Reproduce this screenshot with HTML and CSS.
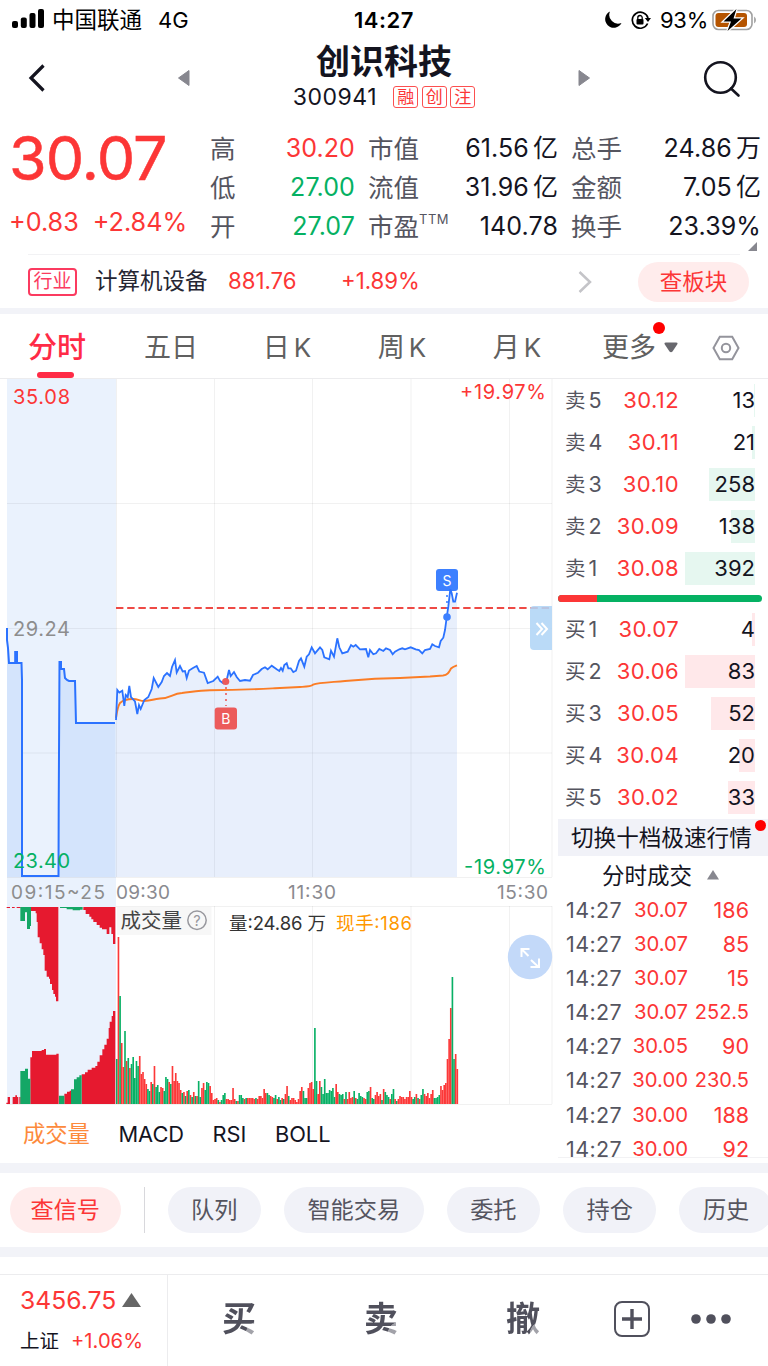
FILE: index.html
```html
<!DOCTYPE html>
<html lang="zh-CN">
<head>
  <meta charset="utf-8">
  <title>创识科技 300941</title>
  <link rel="stylesheet" href="styles.css">
</head>
<body>
  <div class="status-bar">
    <svg class="signal" width="32" height="20" viewBox="0 0 32 20">
      <rect x="0" y="12" width="6" height="7" rx="2"/>
      <rect x="8.800" y="8.500" width="6" height="10.500" rx="2"/>
      <rect x="17.500" y="4" width="6" height="15" rx="2"/>
      <rect x="26" y="0" width="6" height="19" rx="2"/>
    </svg>
    <span class="carrier">中国联通</span>
    <span class="network">4G</span>
    <span class="clock">14:27</span>
    <svg class="moon" width="18" height="18" viewBox="0 0 18 18">
      <path d="M6 0.500A8.600 8.600 0 1 0 17.500 12A8.800 8.800 0 0 1 6 0.500Z"/>
    </svg>
    <svg class="lock" width="20" height="18" viewBox="0 0 20 18">
      <path d="M16.600 12.500A8 8 0 1 1 17 7" fill="none" stroke="#000" stroke-width="1.700"/>
      <path d="M13.800 7H20L17 11Z"/>
      <rect x="5.500" y="8" width="7" height="5.500" rx="1"/>
      <path d="M6.800 8.500V6.700a2.200 2.200 0 0 1 4.400 0V8.500" fill="none" stroke="#000" stroke-width="1.300"/>
    </svg>
    <span class="percent">93%</span>
    <svg class="battery" width="46" height="24" viewBox="0 0 46 24">
      <rect x="1" y="2.500" width="39" height="19" rx="5.500" fill="#fff" stroke="#a0a0a0" stroke-width="1.600"/>
      <rect x="3.500" y="5" width="31.500" height="14" rx="3" fill="#b55400"/>
      <path d="M42.200 8.500a4.500 4.500 0 0 1 0 7z" fill="#999"/>
      <path d="M24.500 1L11.500 13.500H19L15.500 23L29.500 10.500H21.500Z" stroke="#fff" stroke-width="2.500" paint-order="stroke"/>
    </svg>
  </div>

  <header class="title-bar">
    <svg class="back" width="18" height="28" viewBox="0 0 18 28"><path d="M15.500 1.500L3 14L15.500 26.500"/></svg>
    <svg class="prev" width="13" height="18" viewBox="0 0 13 18"><path d="M12 1.500V16.500L1.500 9Z"/></svg>
    <div class="stock">
      <h1>创识科技</h1>
      <div class="stock-code">300941 <i>融</i><i>创</i><i>注</i></div>
    </div>
    <svg class="next" width="13" height="18" viewBox="0 0 13 18"><path d="M1 1.500V16.500L11.500 9Z"/></svg>
    <svg class="search" width="38" height="38" viewBox="0 0 38 38"><circle cx="17.500" cy="17.500" r="15.300"/><path d="M28 28.500L35.500 35.500"/></svg>
  </header>

  <section class="quote">
    <div class="price up">
      <div class="last">30.07</div>
      <div class="change"><span>+0.83</span><span>+2.84%</span></div>
    </div>
    <dl>
      <dt>高</dt><dd class="up">30.20</dd>
      <dt>市值</dt><dd>61.56<b>亿</b></dd>
      <dt>总手</dt><dd>24.86<b>万</b></dd>
      <dt>低</dt><dd class="down">27.00</dd>
      <dt>流值</dt><dd>31.96<b>亿</b></dd>
      <dt>金额</dt><dd>7.05<b>亿</b></dd>
      <dt>开</dt><dd class="down">27.07</dd>
      <dt>市盈<sup>TTM</sup></dt><dd>140.78</dd>
      <dt>换手</dt><dd>23.39%</dd>
    </dl>
    <svg class="expand" width="9" height="9" viewBox="0 0 9 9"><path d="M9 0V9H0Z"/></svg>
  </section>

  <section class="industry">
    <span class="industry-tag">行业</span>
    <span class="industry-name">计算机设备</span>
    <span class="industry-index up">881.76</span>
    <span class="industry-rate up">+1.89%</span>
    <svg class="chevron" width="14" height="24" viewBox="0 0 14 24"><path d="M1.500 2L12 12L1.500 22"/></svg>
    <a class="sector-btn">查板块</a>
  </section>

  <nav class="tabs">
    <a class="active">分时</a>
    <a>五日</a>
    <a>日<s>K</s></a>
    <a>周<s>K</s></a>
    <a>月<s>K</s></a>
    <a class="more">更多<svg width="14" height="11" viewBox="0 0 14 11"><path d="M2 0.500H12Q14.500 0.500 13 2.800L8.500 9.500Q7 11 5.500 9.500L1 2.800Q-0.500 0.500 2 0.500Z"/></svg></a>
    <svg class="settings" width="28" height="26" viewBox="0 0 28 26"><path d="M7.800 1.700H20.200L26.500 13L20.200 24.300H7.800L1.500 13Z"/><circle cx="14" cy="13" r="4.200"/></svg>
  </nav>

  <main class="market">
    <div class="charts">
      <svg class="price-chart" width="558" height="528" viewBox="0 378 558 528">
        <rect class="auction-bg" x="7" y="379" width="109" height="527"/>
        <path class="grid" d="M7 503.500H552M7 628.500H552M7 753H552M7 877.500H552M116.500 379V877M214.500 379V877M312.500 379V877M411 379V877M509.500 379V877M552 379V877"/>
        <path class="auction-area" d="M7 628V640L8 648L9 663H14.500V652H17.500V663H21.500V876H58.500L59.500 662H61V669H64L65 678L67 681H75L76 723H115.500V877H7Z"/>
        <path class="auction-line" d="M7 628V640L8 648L9 663H15.200V652H17V663H21.500L22 680V876H58.500L58.700 809L59.500 662H61V669H64L65 678L67 680L69 681H75L76 723H115"/>
        <path class="area" id="area"/>
        <path class="prev-close" d="M116 608H552"/>
        <path class="average" d="M116 718C117 711 118 706 120 703C123 700 128 699 133 699C138 699 140 701 144 701C152 700.500 152 699.500 160 698.500C172 698 172 693.500 182 693C193 691.700 200 690.300 210 690.300C240 690 260 689 275 688.300L300 687C308 686.500 311 686.500 313 684.700C318 682.500 330 682.300 345 681L375 678.800L400 678L430 676.500L443 675.500C448 675 449 672 451 668.500C453 666.500 455 666 457 665.300"/>
        <path class="mark-dots sell" d="M447 595V612"/>
        <rect class="sell" x="436" y="569" width="22" height="22" rx="3"/>
        <path class="line" id="line"/>
        <path class="mark-dots buy" d="M226 687V706"/>
        <circle class="buy" cx="225.700" cy="681.500" r="3.600"/>
        <rect class="buy" x="214.700" y="707.500" width="22.300" height="22" rx="3"/>
        <text class="mark" x="225.800" y="724">B</text>
        <circle class="sell" cx="447" cy="617" r="3.800"/>
        <text class="mark" x="447" y="585.500">S</text>
        <path d="M552 606H534Q530 606 530 610V646Q530 650 534 650H552Z" fill="#b1d5f6" fill-opacity="0.88"/>
        <path class="fold" d="M536.500 623L542 629L536.500 635M541.500 623L547 629L541.500 635"/>
        <text class="axis up" x="13" y="404" textLength="57">35.08</text>
        <text class="axis up" x="460" y="399" textLength="86">+19.97%</text>
        <text class="axis flat" x="13" y="636" textLength="57">29.24</text>
        <text class="axis down" x="13" y="868" textLength="57">23.40</text>
        <text class="axis down" x="464" y="873.500" textLength="82">-19.97%</text>
        <text class="time flat" x="11" y="898.500" textLength="94">09:15~25</text>
        <text class="time" x="116" y="898.500" textLength="54">09:30</text>
        <text class="time" x="288" y="898.500" textLength="48">11:30</text>
        <text class="time" x="497" y="898.500" textLength="51">15:30</text>
      </svg>
      <svg class="volume-chart" width="558" height="202" viewBox="0 906 558 202">
        <rect class="auction-bg" x="7" y="906" width="109" height="198"/>
        <path class="grid" d="M116 906.500H552M7 1104.500H552M214.500 906V1104M312.500 906V1104M411 906V1104M509.500 906V1104M552 906V1104"/>
        <!-- call auction, matched volume below and unmatched above -->
        <g transform="translate(0 880) scale(0.33333)">
          <path class="vol-red" d="M20 81h10v3H20ZM36 81h8v3h-8ZM50 81h12v3H50ZM92 81V93H107V100H110V126H113V172H119V190H125V208H130V225H134V272H140V290H147V296H150V312H156V330H160V342H165V350H168V364H175V81ZM250 81V90H257V102H268V110H274V118H280V126H290V135H299V143H306V148H320V162H328V142H334V162H339V192H346V81Z"/>
          <path class="vol-green" d="M61 81V123H75V97H81V147H90V138H93V81ZM180 81V84H200V88H218V91H240V89H248V81Z"/>
          <path class="vol-red" d="M19 668h4v-17h7v21H19ZM38 672V651H46V646H51V651H55V672ZM58 672v-21h4v21ZM91 672V532H96V513H125V510H132V507H138V524H169V521H176V672ZM193 672V641H201V635H209V632H213V672ZM245 672V583H255V577H263V569H275V563H286V558H292V545H299V526H307V508H313V494H320V476H326V444H329V425H335V408H339V393H346V672Z"/>
          <path class="vol-green" d="M61 672V573H75V566H84V596H91V672ZM177 672V647H193V672ZM213 672V628H222V598H230V592H238V586H245V672Z"/>
        </g>
        <g id="volume"></g>
        <rect x="117" y="907" width="94.500" height="28" fill="#f7f7f7"/>
        <text class="vol-title" x="120.500" y="928">成交量</text>
        <circle class="help" cx="197" cy="920.300" r="9.200"/>
        <text class="help-mark" x="197" y="925.500">?</text>
        <text class="vol-text" x="229" y="929.500" textLength="97">量:24.86 万</text>
        <text class="vol-text now" x="336" y="929.500" textLength="76">现手:186</text>
        <circle cx="530" cy="957" r="22.200" fill="#c3d9f9"/>
        <path class="zoom-icon" d="M521.500 957V949H529.500M521.500 949L528.500 956M531 960L538.500 967M539 958.500V967H530.500"/>
      </svg>
      <div class="indicators">
        <a class="active">成交量</a><a>MACD</a><a>RSI</a><a>BOLL</a>
      </div>
    </div>

    <aside class="depth">
      <ul class="orders sell-orders">
        <li><span>卖<em>5</em></span><b>30.12</b><u style="--w: 1px">13</u></li>
        <li><span>卖<em>4</em></span><b>30.11</b><u style="--w: 3px">21</u></li>
        <li><span>卖<em>3</em></span><b>30.10</b><u style="--w: 46px">258</u></li>
        <li><span>卖<em>2</em></span><b>30.09</b><u style="--w: 24px">138</u></li>
        <li><span>卖<em>1</em></span><b>30.08</b><u style="--w: 70px">392</u></li>
      </ul>
      <div class="ratio"><div style="width: 19%"></div></div>
      <ul class="orders buy-orders">
        <li><span>买<em>1</em></span><b>30.07</b><u style="--w: 3px">4</u></li>
        <li><span>买<em>2</em></span><b>30.06</b><u style="--w: 70px">83</u></li>
        <li><span>买<em>3</em></span><b>30.05</b><u style="--w: 44px">52</u></li>
        <li><span>买<em>4</em></span><b>30.04</b><u style="--w: 16px">20</u></li>
        <li><span>买<em>5</em></span><b>30.02</b><u style="--w: 27px">33</u></li>
      </ul>
      <div class="switch-depth">切换十档极速行情</div>
      <div class="trades-title">分时成交<svg width="14" height="12" viewBox="0 0 14 12"><path d="M7 1L13 10.500H1Z"/></svg></div>
      <ul class="trades">
        <li><span>14:27</span><b>30.07</b><u>186</u></li>
        <li><span>14:27</span><b>30.07</b><u>85</u></li>
        <li><span>14:27</span><b>30.07</b><u>15</u></li>
        <li><span>14:27</span><b>30.07</b><u class="small">252.5</u></li>
        <li><span>14:27</span><b>30.05</b><u>90</u></li>
        <li><span>14:27</span><b>30.00</b><u class="small">230.5</u></li>
        <li><span>14:27</span><b>30.00</b><u>188</u></li>
        <li><span>14:27</span><b>30.00</b><u>92</u></li>
      </ul>
    </aside>
  </main>

  <div class="chips">
    <a class="signal-chip">查信号</a>
    <div class="chip-line"></div>
    <a>队列</a>
    <a>智能交易</a>
    <a>委托</a>
    <a>持仓</a>
    <a>历史</a>
  </div>

  <footer>
    <div class="index">
      <div class="index-value up">3456.75<svg width="19" height="14" viewBox="0 0 19 14"><path d="M9.500 0L19 14H0Z"/></svg></div>
      <div class="index-name">上证<span class="up">+1.06%</span></div>
    </div>
    <a class="trade">买</a>
    <a class="trade">卖</a>
    <a class="trade">撤</a>
    <svg class="add" width="36" height="36" viewBox="0 0 36 36"><rect x="1" y="1" width="34" height="34" rx="7"/><path d="M18 8V28M8 18H28"/></svg>
    <svg class="dots" width="40" height="12" viewBox="0 0 40 12"><circle cx="5" cy="6" r="4.800"/><circle cx="20" cy="6" r="4.800"/><circle cx="35" cy="6" r="4.800"/></svg>
  </footer>
  <script src="chart.js"></script>
</body>
</html>
```

FILE: styles.css
```css
* {
  box-sizing: border-box;
}

body {
  margin: 0;
  width: 768px;
  height: 1366px;
  overflow: hidden;
  background: #fff;
  color: #14141f;
  font-family: Inter, "Noto Sans CJK SC", sans-serif;
}

svg {
  display: block;
  flex-shrink: 0;
}

ul, dl, dd, h1 {
  margin: 0;
  padding: 0;
  list-style: none;
}

b, i, em, u, s {
  font-style: normal;
  font-weight: 400;
  text-decoration: none;
}

.up {
  color: #fc3636;
  fill: #fc3636;
}

.down {
  color: #05b163;
  fill: #05b163;
}

/* status bar */
.status-bar {
  display: flex;
  align-items: center;
  height: 40px;
  padding-left: 12px;
  color: #000;
  font-size: 22px;
  line-height: 40px;
}

.signal {
  margin-top: -2px;
}

.carrier {
  width: 106px;
  padding-left: 8px;
  font-size: 22.5px;
  white-space: nowrap;
}

.network {
  width: 204px;
  padding-left: 8px;
}

.clock {
  width: 250px;
  font-size: 22px;
  font-weight: 600;
  letter-spacing: 0.5px;
}

.lock {
  margin-left: 9px;
}

.percent {
  width: 51px;
  margin-left: 9px;
  letter-spacing: -0.3px;
}

.battery {
  margin-left: 1px;
}

/* title */
.title-bar {
  display: flex;
  height: 80px;
  padding-left: 28px;
}

.back {
  margin-top: 24px;
  fill: none;
  stroke: #14141f;
  stroke-width: 3.2;
}

.prev, .next {
  margin-top: 29px;
  fill: #87878f;
  stroke: #87878f;
  stroke-linejoin: round;
}

.prev {
  margin-left: 131px;
}

.stock {
  width: 388px;
  text-align: center;
}

h1 {
  height: 42px;
  padding-top: 1px;
  font-size: 34px;
  font-weight: 600;
  line-height: 42px;
}

.stock-code {
  display: flex;
  align-items: center;
  justify-content: center;
  height: 30px;
  font-size: 23px;
  letter-spacing: 0.5px;
}

.stock-code i {
  width: 25px;
  height: 22px;
  margin-left: 3.5px;
  border: 1.5px solid #fc5050;
  border-radius: 3px;
  color: #fc3636;
  font-size: 17px;
  line-height: 20px;
  letter-spacing: 0;
}

.stock-code i:first-child {
  margin-left: 16px;
}

.search {
  margin: 20px 0 0 112px;
  fill: none;
  stroke: #14141f;
  stroke-width: 2.6;
  stroke-linecap: round;
}

/* quote */
.quote {
  position: relative;
  display: flex;
  height: 134px;
  padding-top: 8px;
}

.price {
  width: 210px;
  padding-left: 9px;
}

.last {
  height: 62px;
  font-size: 61px;
  line-height: 60px;
  letter-spacing: -1px;
  -webkit-text-stroke: 0.5px #fc3636;
}

.change {
  display: flex;
  gap: 14px;
  margin-top: 15px;
  font-size: 25.2px;
  line-height: 34px;
}

dl {
  display: grid;
  grid-template-columns: 60px 85px 83px 120px 83px 120px;
  grid-auto-rows: 39px;
  padding-top: 1px;
  font-size: 25px;
  line-height: 39px;
}

dt {
  color: #55555f;
  font-size: 25.5px;
  white-space: nowrap;
}

dl dt:nth-of-type(3n+2), dl dt:nth-of-type(3n) {
  padding-left: 13px;
}

dd {
  text-align: right;
  white-space: nowrap;
  letter-spacing: 0.1px;
}

dd b {
  margin-left: 4px;
}

sup {
  display: inline-block;
  font-size: 13px;
  line-height: 13px;
  letter-spacing: 0.5px;
  vertical-align: 12px;
}

.expand {
  position: absolute;
  right: 11px;
  bottom: 3px;
  fill: #87878f;
}

/* industry */
.industry {
  display: flex;
  align-items: center;
  height: 54px;
  margin: 0 28px;
  font-size: 22.2px;
  border-top: 1px solid #f2f2f4;
}

.industry > * {
  flex-shrink: 0;
}

.industry-tag {
  width: 49px;
  height: 28px;
  border: 2px solid #fb3b60;
  border-radius: 4px;
  color: #fb3b60;
  font-size: 19px;
  line-height: 24px;
  text-align: center;
}

.industry-name {
  width: 132px;
  padding-left: 18px;
  color: #262633;
  font-size: 22.5px;
  line-height: 30px;
  margin-top: -2px;
  white-space: nowrap;
}

.industry-index, .industry-rate {
  margin-top: -2px;
}

.industry-index {
  width: 114px;
  padding-left: 19px;
}

.industry-rate {
  width: 265px;
  padding-left: 18px;
}

.chevron {
  margin-left: -10px;
  fill: none;
  stroke: #c4c4c8;
  stroke-width: 2.5;
}

.sector-btn {
  width: 111px;
  height: 40px;
  margin-left: 46px;
  border-radius: 20px;
  background: #ffecec;
  color: #fc3636;
  font-size: 22.5px;
  line-height: 40px;
  text-align: center;
}

/* tabs */
.tabs {
  display: grid;
  grid-template-columns: 114px 114px 118px 112px 118px 128px 44px;
  height: 71px;
  border-top: 6px solid #f2f3f8;
  border-bottom: 1px solid #ececee;
  color: #606060;
  font-size: 27px;
  line-height: 67px;
  text-align: center;
}

.tabs s {
  margin-left: 4px;
  font-size: 26px;
}

.tabs .active {
  color: #ff2b46;
  font-size: 29px;
  font-weight: 500;
}

.tabs .active::after {
  content: "";
  display: block;
  width: 37px;
  height: 6px;
  margin: -9px 0 0 37px;
  border-radius: 3px;
  background: #ff2b46;
}

.more {
  position: relative;
  display: flex;
  justify-content: center;
  align-items: center;
  gap: 8px;
}

.more svg {
  fill: #68686e;
}

.more::after {
  content: "";
  position: absolute;
  left: 77px;
  top: 8px;
  width: 12px;
  height: 12px;
  border-radius: 50%;
  background: #f00;
}

.settings {
  place-self: center;
  fill: none;
  stroke: #94949c;
  stroke-width: 2;
}

/* charts */
.market {
  display: grid;
  grid-template-columns: 558px 210px;
  height: 784px;
}

.price-chart {
  margin-top: -1px;
}

.auction-bg {
  fill: #eaf2fd;
}

.grid {
  fill: none;
  stroke: #000;
  stroke-opacity: 0.055;
}

.auction-area {
  fill: #d4e4fc;
}

.auction-line, .line {
  fill: none;
  stroke: #2b72ff;
  stroke-width: 2;
}

.line {
  stroke-width: 1.8;
}

.area {
  fill: #2b6ee8;
  fill-opacity: 0.11;
}

.average {
  fill: none;
  stroke: #fb7d26;
  stroke-width: 1.9;
}

.prev-close {
  stroke: #ee4a45;
  stroke-width: 2;
  stroke-dasharray: 7.4 3.8;
}

.buy {
  fill: #ec5b5b;
}

.sell {
  fill: #3d80ff;
}

.mark-dots {
  stroke-width: 1.6;
  stroke-dasharray: 2 4;
}

.mark-dots.buy {
  stroke: #ec5b5b;
}

.mark-dots.sell {
  stroke: #3d80ff;
}

.mark {
  fill: #fff;
  font-size: 14px;
  text-anchor: middle;
}

.fold, .zoom-icon {
  fill: none;
  stroke: #fff;
  stroke-width: 2;
}

.axis {
  font-size: 20px;
}

.time {
  fill: #8a8a90;
  font-size: 19px;
}

.flat {
  fill: #8d8d8d;
}

.vol-red {
  fill: #e6192f;
}

.vol-green {
  fill: #14a766;
}

.vol-title {
  fill: #444;
  font-size: 20.5px;
}

.help {
  fill: none;
  stroke: #98989e;
  stroke-width: 1.5;
}

.help-mark {
  fill: #98989e;
  font-size: 14.5px;
  text-anchor: middle;
}

.vol-text {
  fill: #333;
  font-size: 18.5px;
}

.vol-text.now {
  fill: #ff9800;
}

.indicators {
  display: flex;
  padding-left: 23px;
  font-size: 21.8px;
  line-height: 52px;
}

.indicators a {
  margin-right: 28.5px;
}

.indicators .active {
  color: #fd8a3c;
  font-size: 22.3px;
}

/* order book */
.orders li {
  display: grid;
  grid-template-columns: 42px 72px 76px;
  align-items: center;
  height: 42.1px;
  padding-left: 7px;
  font-size: 22px;
  line-height: 33px;
}

.orders span {
  color: #55555f;
  font-size: 20.5px;
}

.orders em {
  margin-left: 3px;
  font-size: 21.5px;
}

.orders b, .orders u {
  text-align: right;
}

.orders b {
  letter-spacing: 0.4px;
}

.orders b, .trades b, .trades u {
  color: #fc3636;
}

.orders u {
  height: 33px;
  background: linear-gradient(#e6f7f0, #e6f7f0) right / var(--w) 100% no-repeat;
}

.buy-orders u {
  background-image: linear-gradient(#ffe8ea, #ffe8ea);
}

.ratio {
  width: 204px;
  height: 7px;
  margin: 5.500px 0 6.500px;
  border-radius: 4px;
  background: #05b163;
  overflow: hidden;
}

.ratio div {
  height: 100%;
  background: #fc3636;
}

.switch-depth {
  position: relative;
  height: 37px;
  background: #f1f2f8;
  font-size: 22.6px;
  line-height: 37px;
  padding-left: 13px;
  white-space: nowrap;
}

.switch-depth::after {
  content: "";
  position: absolute;
  left: 197px;
  top: 1px;
  width: 11px;
  height: 11px;
  border-radius: 50%;
  background: #f00;
}

.trades-title {
  display: flex;
  align-items: center;
  gap: 14px;
  height: 37px;
  padding-left: 44px;
  font-size: 22.5px;
}

.trades-title svg {
  margin-top: 2px;
  fill: #87878f;
}

.trades {
  height: 265px;
  border-bottom: 1px solid #f2f2f4;
}

.trades li {
  display: grid;
  grid-template-columns: 57px 65px 61px;
  height: 34.1px;
  padding-left: 8px;
  font-size: 21.5px;
  line-height: 34px;
}

.trades span {
  color: #55555f;
  letter-spacing: 0.4px;
}

.trades b {
  font-size: 20.3px;
  text-align: right;
}

.trades u {
  text-align: right;
}

.trades .small {
  font-size: 20px;
}

/* shortcuts */
.chips {
  display: flex;
  gap: 23px;
  height: 94px;
  padding: 14px 0 0 10px;
  border-top: 10px solid #f2f3f8;
  border-bottom: 10px solid #f2f3f8;
}

.chips > * {
  flex-shrink: 0;
}

.chips a {
  height: 46px;
  padding: 0 23.5px;
  border-radius: 23px;
  background: #f1f2f8;
  color: #55555f;
  font-size: 23.2px;
  line-height: 47px;
  white-space: nowrap;
}

.chips .signal-chip {
  padding: 0 20.5px;
  background: #ffecec;
  color: #fc3636;
}

.chip-line {
  width: 1px;
  height: 46px;
  background: #d8d8dc;
}

/* bottom bar */
footer {
  display: flex;
  align-items: center;
  height: 92px;
  margin-top: 17px;
  padding-bottom: 3px;
  border-top: 1px solid #ececee;
}

.index {
  align-self: flex-start;
  width: 168px;
  height: 92px;
  padding: 8px 0 0 20px;
  border-right: 1px solid #ececee;
}

.index-value {
  display: flex;
  align-items: center;
  gap: 6px;
  font-size: 24.7px;
  line-height: 34px;
}

.index-value svg {
  fill: #666;
}

.index-name {
  margin-top: 8px;
  font-size: 19.5px;
  line-height: 32px;
}

.index-name span {
  margin-left: 12px;
  font-size: 20.2px;
}

.trade {
  width: 142px;
  background: radial-gradient(circle at 90px 38px, #a2a2a9 12px, #50505c 12.5px);
  background-clip: text;
  color: transparent;
  font-size: 34px;
  font-weight: 700;
  line-height: 46px;
  text-align: center;
}

.add {
  margin-left: 20px;
  fill: none;
  stroke: #50505c;
  stroke-width: 2;
}

.add path {
  stroke-width: 3.4;
}

.dots {
  margin-left: 41px;
  fill: #50505c;
}
```

FILE: chart.js
```javascript
const prices = [
  [116, 720], [117.3, 690], [119.3, 692.5], [122.3, 690.7], [124.3, 706], [125.7, 695],
  [127.7, 697], [129.3, 686], [131, 697], [135, 701.5], [137.3, 714], [139, 705],
  [140.7, 709], [144.3, 700], [148.3, 697], [151.7, 689], [153.7, 678], [158.3, 687],
  [161.7, 682], [164, 676], [167, 673], [170, 676], [172, 667], [175, 660],
  [176.7, 672.5], [180, 666], [182.7, 671.5], [185, 671], [186.7, 678], [189, 670.5],
  [193, 668], [196.7, 666], [199.3, 671.5], [204, 672.7], [207.7, 683], [213.3, 681],
  [217.7, 676.7], [220, 681], [223.3, 683.3], [226.7, 680], [229, 670], [230.7, 676],
  [234, 672], [236.7, 677], [240, 681], [245, 680], [250, 680.7], [253, 675],
  [258, 672.7], [261.7, 669], [265, 667.3], [267.7, 669.3], [271.7, 665.7], [276.7, 669.3],
  [279.3, 671], [281, 668], [282.7, 670.7], [284.3, 665], [286.7, 663.3], [288.3, 668.3],
  [290.7, 668.3], [293.3, 672], [296, 670.7], [299, 661], [301, 658.3], [304.3, 666.7],
  [306.7, 656.7], [309, 654.3], [311.7, 647.3], [315, 653.3], [320, 647.3], [322.3, 650],
  [324.3, 657.3], [329.3, 659.3], [331, 650.7], [334, 656.7], [337.3, 638.3], [339.3, 647.3],
  [342.3, 653.3], [347.7, 651.7], [351, 645], [353.3, 646.7], [355.7, 645], [360, 649.3],
  [366, 649], [368.3, 657.3], [370, 650], [373.3, 654.3], [376, 653.3], [379.3, 649],
  [383.3, 651], [386, 648.3], [390, 650], [392.7, 654.3], [395, 651.7], [399.3, 649.3],
  [402.3, 648.3], [405, 649.3], [410.7, 647.3], [415.7, 649.3], [419, 650], [422.3, 653.3],
  [425, 650], [430, 649], [432.3, 644.3], [435, 646], [439, 647.3], [440.7, 641],
  [443.3, 637.7], [445, 630], [446.7, 617.3], [448.3, 606.7], [450.3, 589.3], [451.7, 593.3],
  [453.3, 601.7], [455, 601.7], [457, 592.7]
];

// one bar per minute: direction + height
const volumes = `
g45 r167 g108 r61 r37 g73 r43 g46 r36 g40 g47 g26 g43 g38 r48 r30 r32 r25 r20 g15
g13 r22 g20 r38 g17 g19 g12 r17 r16 g13 g27 g25 r22 g20 r38 r23 r31 r23 r21 r14
g11 r12 g8 r13 g14 r9 g7 r12 g8 r8 g23 g7 r16 r21 g14 g22 g21 r18 r11 r4
r5 r6 g4 r2 g4 g9 g11 r5 r5 r4 r4 r16 r5 g3 r3 g9 g9 g6 r5 g6
r6 r6 r6 r6 r5 g6 r5 r8 r8 r6 r15 r11 g11 g9 r8 r7 g6 g9 r5 g7
g4 r6 g5 r10 r18 g8 r4 r6 r6 r4 r2 r5 r13 r17 g13 g6 g6 r16 r21 r22
r15 g76 g23 r10 r23 g17 g10 g25 g11 g11 g14 g13 g16 g7 r20 r12 g10 g9 g10 r5
g12 r5 r12 r6 r7 g13 r6 g5 g11 g8 g7 r6 r5 g12 g13 r17 g6 g5 r9 r12
r8 r10 g4 r15 g12 g9 g7 r5 g10 g15 r5 g3 r5 r8 r7 r7 r5 r7 r7 r13
r7 g5 g7 r10 g6 r5 g9 g15 r10 r8 r11 r6 r10 r14 g6 g6 g7 g9 r18 r14
r19 r21 r45 r65 r96 g127 g45 r50 r35`.trim().split(/\s+/);

const points = prices.map(p => p.join(' ')).join('L');
document.getElementById('line').setAttribute('d', 'M' + points);
document.getElementById('area').setAttribute('d', 'M' + points + 'V877H116Z');

const volume = document.getElementById('volume');
volumes.forEach((v, i) => {
  const bar = document.createElementNS('http://www.w3.org/2000/svg', 'rect');
  const height = Number(v.slice(1));
  bar.setAttribute('x', 116 + i * 1.637);
  bar.setAttribute('y', 1104 - height);
  bar.setAttribute('width', 1.637);
  bar.setAttribute('height', height);
  bar.setAttribute('fill', v[0] === 'r' ? '#fc3838' : '#08b065');
  volume.appendChild(bar);
});
```
